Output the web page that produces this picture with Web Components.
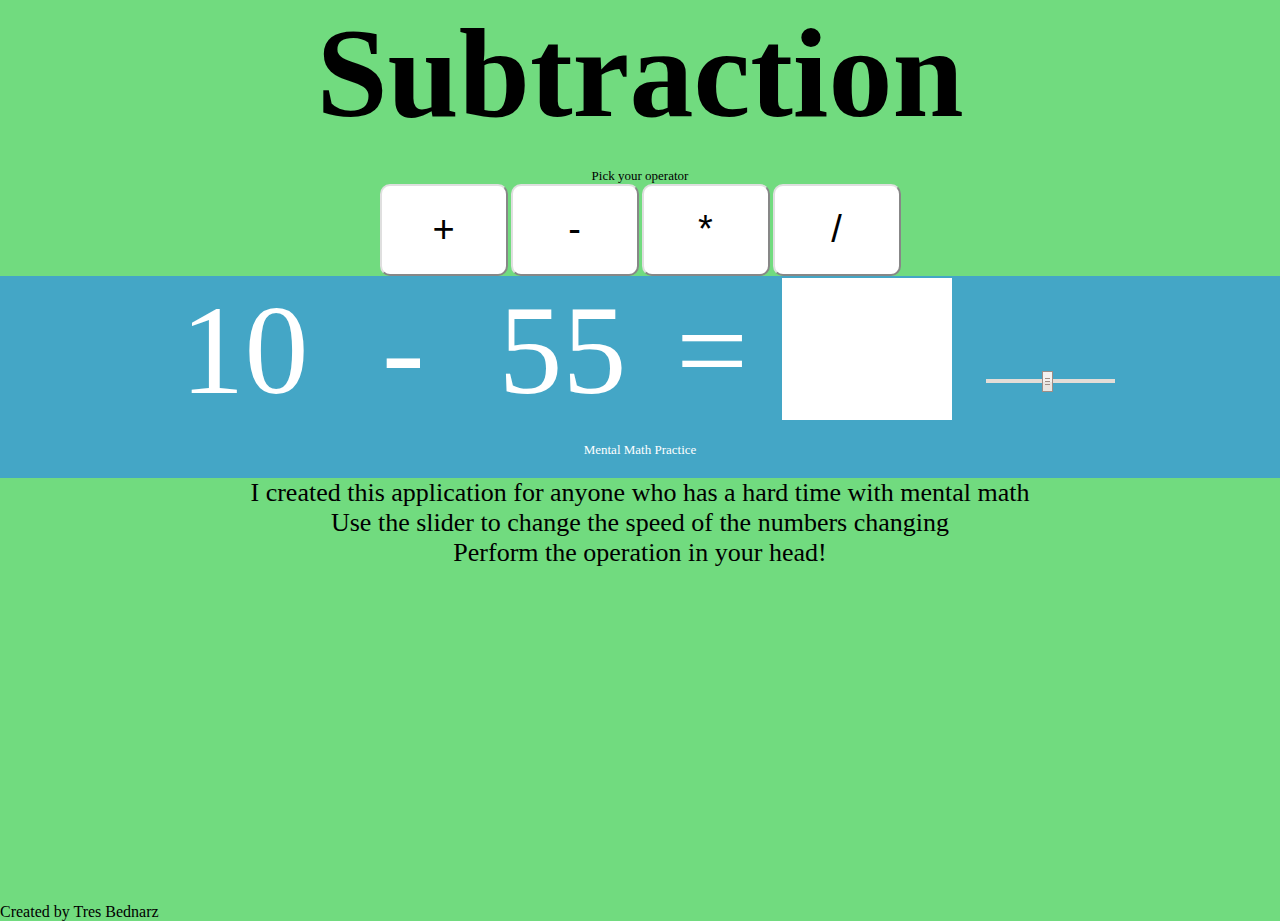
<!DOCTYPE html>
<html lang="en">
<head>
<meta charset="utf-8">
<meta name="viewport" content="width=device-width, initial-scale=1">
<title>Mental Math Practice</title>
<style>
  body { margin: 0; background: #71db7f; color: #000; font: 16px "Liberation Serif", "Times New Roman", serif; }
</style>
</head>
<body>
<math-app></math-app>

<template id="app-template">
  <style>
    :host { display: flex; flex-direction: column; min-height: 100vh; }
    header { text-align: center; }
    h1 { margin: 0 0 21px; font-size: 128px; line-height: 147px; font-weight: bold; }
    footer { margin-top: auto; line-height: 18px; }
  </style>
  <header>
    <h1>Subtraction</h1>
    <operator-picker></operator-picker>
  </header>
  <main>
    <math-problem left="10" operator="-" right="55">Mental Math Practice</math-problem>
    <app-instructions>
      <p>I created this application for anyone who has a hard time with mental math</p>
      <p>Use the slider to change the speed of the numbers changing</p>
      <p>Perform the operation in your head!</p>
    </app-instructions>
  </main>
  <footer>Created by Tres Bednarz</footer>
</template>

<template id="picker-template">
  <style>
    :host { display: block; }
    p { margin: 0; font-size: 13px; line-height: 16px; }
    div { display: flex; justify-content: center; gap: 3px; }
  </style>
  <p id="label">Pick your operator</p>
  <div role="group" aria-labelledby="label">
    <operator-button name="Add">+</operator-button>
    <operator-button name="Subtract">-</operator-button>
    <operator-button name="Multiply">*</operator-button>
    <operator-button name="Divide">/</operator-button>
  </div>
</template>

<template id="button-template">
  <style>
    :host { display: block; width: 128px; }
    button {
      display: block; box-sizing: border-box; width: 100%; height: 92px; padding: 0 0 2px;
      border: 2px solid; border-color: #dfdfdf #878787 #878787 #dfdfdf; border-radius: 10px;
      background: #fff; color: #000; font: 38px "Liberation Sans", Arial, sans-serif; cursor: pointer;
    }
  </style>
  <button type="button"><slot></slot></button>
</template>

<template id="problem-template">
  <style>
    :host { display: block; padding: 2px 0 21px; background: #44a6c6; color: #fff; text-align: center; }
    .row { display: flex; justify-content: center; gap: 34px; font-size: 128px; line-height: 144px; }
    .terms { display: grid; grid-template-columns: repeat(3, 159px); }
    input[type="text"] {
      box-sizing: border-box; width: 170px; height: 142px; padding: 0 8px; border: 0; border-radius: 0;
      background: #fff; color: #000; font: inherit; text-align: center;
    }
    speed-slider { align-self: flex-end; margin-bottom: 31px; }
    p { margin: 20px 0 0; font-size: 13px; line-height: 15px; }
  </style>
  <div class="row">
    <div class="terms"><span class="left"></span><span class="operator"></span><span class="right"></span></div>
    <span>=</span>
    <input type="text" aria-label="Answer">
    <speed-slider></speed-slider>
  </div>
  <p><slot></slot></p>
</template>

<template id="slider-template">
  <style>
    :host { display: block; width: 129px; }
    input { -webkit-appearance: none; appearance: none; display: block; width: 100%; height: 21px; margin: 0; background: transparent; }
    input::-webkit-slider-runnable-track { height: 4px; background: #e3ddd7; }
    input::-webkit-slider-thumb {
      -webkit-appearance: none; box-sizing: border-box; width: 11px; height: 21px; margin-top: -8px;
      border: 1px solid #9d8e87; border-radius: 0;
      background:
        linear-gradient(#9d8e87, #9d8e87) 2px 6px / 5px 1px no-repeat,
        linear-gradient(#9d8e87, #9d8e87) 2px 9px / 5px 1px no-repeat,
        linear-gradient(#9d8e87, #9d8e87) 2px 12px / 5px 1px no-repeat,
        linear-gradient(#f4f2f0 50%, #e9e5e1 50%);
    }
  </style>
  <input type="range" min="0" max="1000" value="475" aria-label="Speed">
</template>

<template id="instructions-template">
  <style>
    :host { display: block; text-align: center; font-size: 26px; line-height: 30px; }
    ::slotted(p) { margin: 0; }
  </style>
  <slot></slot>
</template>

<script>
  class TemplateElement extends HTMLElement {
    constructor() {
      super();
      const template = document.getElementById(this.constructor.template);
      this.attachShadow({ mode: "open" }).append(template.content.cloneNode(true));
    }
  }
  class AppInstructions extends TemplateElement { static template = "instructions-template"; }
  class SpeedSlider extends TemplateElement { static template = "slider-template"; }
  class OperatorButton extends TemplateElement {
    static template = "button-template";
    connectedCallback() {
      this.shadowRoot.querySelector("button").title = this.getAttribute("name");
    }
  }
  class OperatorPicker extends TemplateElement { static template = "picker-template"; }
  class MathProblem extends TemplateElement {
    static template = "problem-template";
    connectedCallback() {
      for (const part of ["left", "operator", "right"]) {
        this.shadowRoot.querySelector("." + part).textContent = this.getAttribute(part);
      }
    }
  }
  class MathApp extends TemplateElement { static template = "app-template"; }

  customElements.define("app-instructions", AppInstructions);
  customElements.define("speed-slider", SpeedSlider);
  customElements.define("operator-button", OperatorButton);
  customElements.define("operator-picker", OperatorPicker);
  customElements.define("math-problem", MathProblem);
  customElements.define("math-app", MathApp);
</script>
</body>
</html>
